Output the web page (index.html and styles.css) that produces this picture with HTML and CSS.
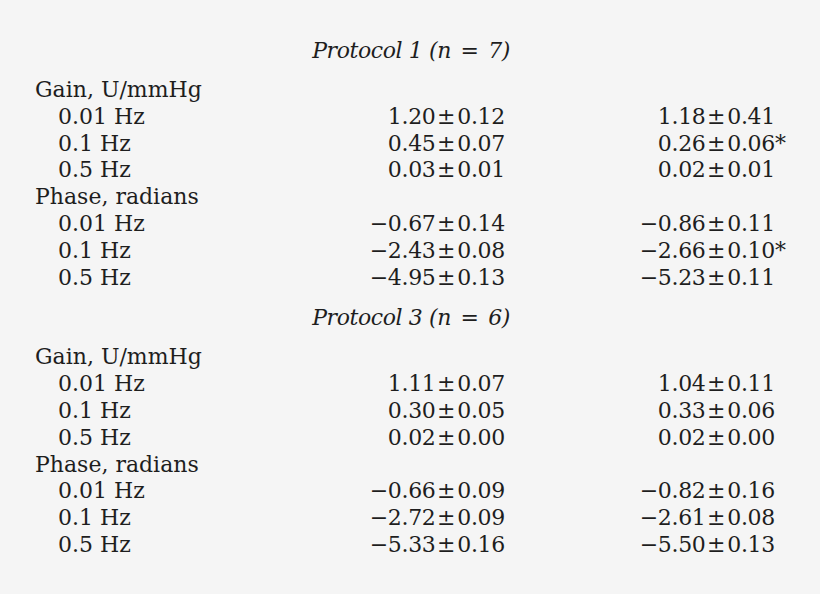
FILE: index.html
```html
<!DOCTYPE html>
<html>
<head>
<meta charset="utf-8">
<link rel="stylesheet" href="styles.css">
</head>
<body>
<div class="data">
  <div class="row proto"><div class="proto-cell"><span class="proto-title">Protocol 1 (n <span class="eq">=</span> 7)</span></div></div>
  <div class="row"><div class="head">Gain, U/mmHg</div></div>
  <div class="row"><div class="sub">0.01 Hz</div><div class="num">1.20<span class="pm">±</span>0.12</div><div class="num">1.18<span class="pm">±</span>0.41</div></div>
  <div class="row"><div class="sub">0.1 Hz</div><div class="num">0.45<span class="pm">±</span>0.07</div><div class="num">0.26<span class="pm">±</span>0.06<span class="sig">*</span></div></div>
  <div class="row"><div class="sub">0.5 Hz</div><div class="num">0.03<span class="pm">±</span>0.01</div><div class="num">0.02<span class="pm">±</span>0.01</div></div>
  <div class="row"><div class="head">Phase, radians</div></div>
  <div class="row"><div class="sub">0.01 Hz</div><div class="num">−0.67<span class="pm">±</span>0.14</div><div class="num">−0.86<span class="pm">±</span>0.11</div></div>
  <div class="row"><div class="sub">0.1 Hz</div><div class="num">−2.43<span class="pm">±</span>0.08</div><div class="num">−2.66<span class="pm">±</span>0.10<span class="sig">*</span></div></div>
  <div class="row"><div class="sub">0.5 Hz</div><div class="num">−4.95<span class="pm">±</span>0.13</div><div class="num">−5.23<span class="pm">±</span>0.11</div></div>
  <div class="row proto proto-second"><div class="proto-cell"><span class="proto-title">Protocol 3 (n <span class="eq">=</span> 6)</span></div></div>
  <div class="row"><div class="head">Gain, U/mmHg</div></div>
  <div class="row"><div class="sub">0.01 Hz</div><div class="num">1.11<span class="pm">±</span>0.07</div><div class="num">1.04<span class="pm">±</span>0.11</div></div>
  <div class="row"><div class="sub">0.1 Hz</div><div class="num">0.30<span class="pm">±</span>0.05</div><div class="num">0.33<span class="pm">±</span>0.06</div></div>
  <div class="row"><div class="sub">0.5 Hz</div><div class="num">0.02<span class="pm">±</span>0.00</div><div class="num">0.02<span class="pm">±</span>0.00</div></div>
  <div class="row"><div class="head">Phase, radians</div></div>
  <div class="row"><div class="sub">0.01 Hz</div><div class="num">−0.66<span class="pm">±</span>0.09</div><div class="num">−0.82<span class="pm">±</span>0.16</div></div>
  <div class="row"><div class="sub">0.1 Hz</div><div class="num">−2.72<span class="pm">±</span>0.09</div><div class="num">−2.61<span class="pm">±</span>0.08</div></div>
  <div class="row"><div class="sub">0.5 Hz</div><div class="num">−5.33<span class="pm">±</span>0.16</div><div class="num">−5.50<span class="pm">±</span>0.13</div></div>
</div>
</body>
</html>
```

FILE: styles.css
```css
html, body {
  margin: 0;
  padding: 0;
  background: #f5f5f5;
}
body {
  padding: 25px 0 0 35px;
  font-family: "DejaVu Serif", "Liberation Serif", serif;
  font-size: 22px;
  color: #1e1e1e;
}
.data {
  width: 740px;
}
.row {
  display: grid;
  grid-template-columns: 200px 270px 270px;
  height: 26.8px;
  line-height: 26.8px;
  white-space: nowrap;
}
.row.proto {
  height: 52px;
  line-height: 52px;
}
.row.proto-second {
  height: 53px;
  line-height: 53px;
}
.proto-cell {
  grid-column: 1 / 3;
  text-align: right;
}
.proto-title {
  display: inline-block;
  font-style: italic;
  letter-spacing: -0.4px;
  margin-right: -5px;
}
.eq {
  margin: 0 3px;
}
.head {
  grid-column: 1 / 4;
}
.sub { padding-left: 23px; }
.num {
  text-align: right;
  letter-spacing: -0.3px;
}
.pm {
  margin: 0 2px 0 1.5px;
}
.sig {
  display: inline-block;
  width: 0;
  overflow: visible;
}
```
